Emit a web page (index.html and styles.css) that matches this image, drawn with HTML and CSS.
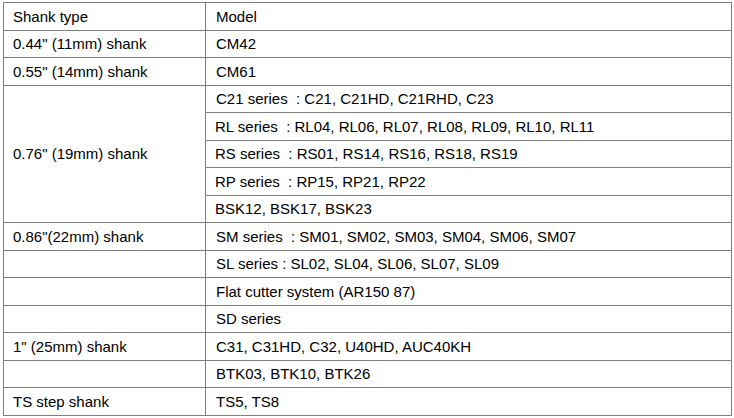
FILE: index.html
```html
<!DOCTYPE html>
<html>
<head>
<meta charset="utf-8">
<link rel="stylesheet" href="styles.css">
</head>
<body>
<table class="spec">
  <colgroup><col class="c1"><col class="c2"></colgroup>
  <tr><td>Shank type</td><td>Model</td></tr>
  <tr><td>0.44" (11mm) shank</td><td>CM42</td></tr>
  <tr><td>0.55" (14mm) shank</td><td>CM61</td></tr>
  <tr><td rowspan="5">0.76" (19mm) shank</td><td>C21 series&nbsp; : C21, C21HD, C21RHD, C23</td></tr>
  <tr><td>RL series&nbsp; : RL04, RL06, RL07, RL08, RL09, RL10, RL11</td></tr>
  <tr><td>RS series&nbsp; : RS01, RS14, RS16, RS18, RS19</td></tr>
  <tr><td>RP series&nbsp; : RP15, RP21, RP22</td></tr>
  <tr><td>BSK12, BSK17, BSK23</td></tr>
  <tr><td>0.86"(22mm) shank</td><td>SM series&nbsp; : SM01, SM02, SM03, SM04, SM06, SM07</td></tr>
  <tr><td></td><td>SL series : SL02, SL04, SL06, SL07, SL09</td></tr>
  <tr><td></td><td>Flat cutter system (AR150 87)</td></tr>
  <tr><td></td><td>SD series</td></tr>
  <tr><td>1" (25mm) shank</td><td>C31, C31HD, C32, U40HD, AUC40KH</td></tr>
  <tr><td></td><td>BTK03, BTK10, BTK26</td></tr>
  <tr><td>TS step shank</td><td>TS5, TS8</td></tr>
</table>
</body>
</html>
```
FILE: styles.css
```css
html, body {
  margin: 0;
  padding: 0;
  background: #fff;
}
body {
  padding: 2px 0 0 3px;
  font-family: "Liberation Sans", Arial, sans-serif;
  font-size: 15px;
  color: #000;
}
.spec {
  border-collapse: collapse;
  width: 728px;
  table-layout: fixed;
}
.c1 { width: 202px; }
.c2 { width: 526px; }
.spec tr { height: 27.5px; }
.spec td {
  border: 1px solid #7f7f7f;
  padding: 0 0 0 9px;
  vertical-align: middle;
  line-height: 17px;
  white-space: nowrap;
}
.spec td + td { padding-left: 10px; }
```
